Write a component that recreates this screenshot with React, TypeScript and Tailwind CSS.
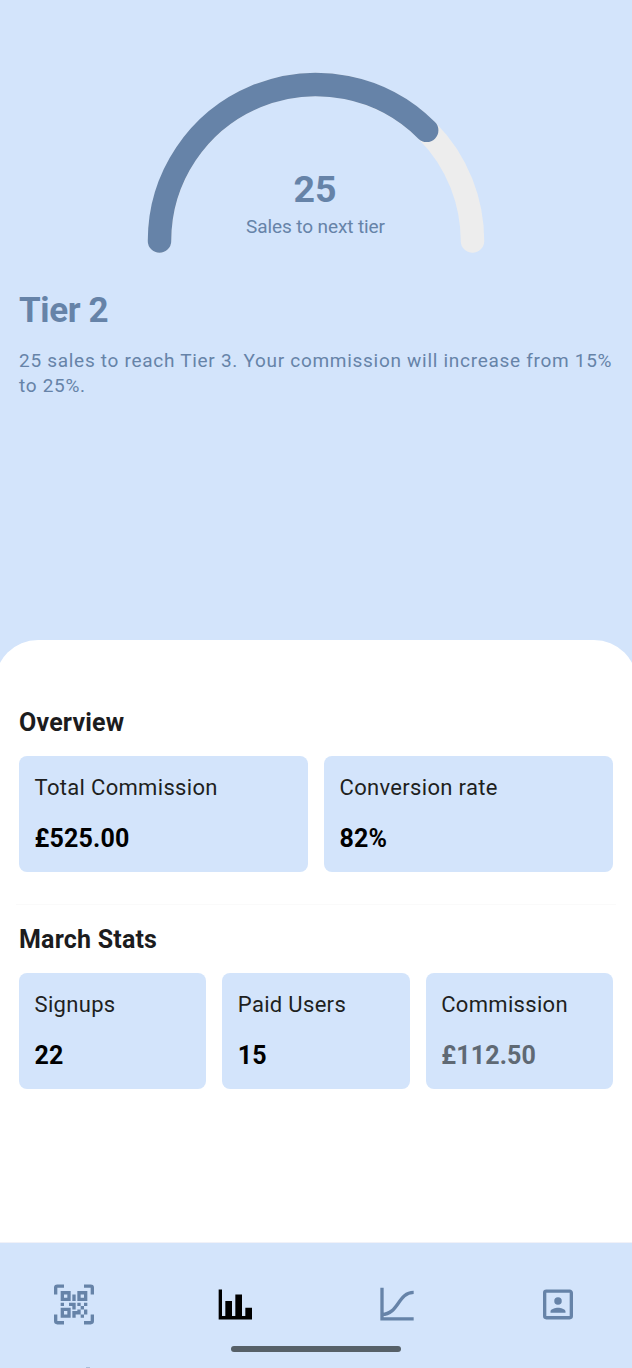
import type { ReactNode } from "react";

type StatProps = { label: string; value: string; muted?: boolean };

function Stat({ label, value, muted }: StatProps) {
  return (
    <div className="h-[116px] min-w-0 flex-1 rounded-lg bg-[#d3e4fb] pl-[15.5px] pt-[18px]">
      <p className="whitespace-nowrap text-[22px] leading-7 tracking-[0.32px] text-[#1e1f21]">{label}</p>
      <p className={`mt-[21px] whitespace-nowrap text-[25px] font-bold leading-8 tracking-[0.15px] ${muted ? "text-[#5f6974]" : "text-black"}`}>
        {value}
      </p>
    </div>
  );
}

function Gauge() {
  return (
    <div className="relative mx-auto h-[181px] w-[338px]">
      <svg viewBox="0 0 338 181" className="h-[181px] w-[338px]" fill="none" strokeWidth="23.5" strokeLinecap="round">
        <path d="M12.5 169A156.5 156.5 0 0 1 325.5 169" stroke="#ededed" />
        <path d="M12.5 169A156.5 156.5 0 0 1 279.66 58.34" stroke="#6683a8" />
      </svg>
      <div className="absolute inset-x-0 top-[95px] text-center text-[#6683a8]">
        <p className="-ml-[2px] text-[37.5px] font-bold leading-[44px]">25</p>
        <p className="-ml-[1px] mt-[4px] text-[19px] leading-6 tracking-[-0.1px]">Sales to next tier</p>
      </div>
    </div>
  );
}

function NavButton({ label, active, children }: { label: string; active?: boolean; children: ReactNode }) {
  return (
    <button aria-label={label} className={`size-10 ${active ? "text-black" : "text-[#6683a8]"}`}>
      <svg viewBox="0 -0.25 24 24" className="size-10 overflow-visible" fill="currentColor">
        {children}
      </svg>
    </button>
  );
}

export default function App() {
  return (
    <div className="flex h-[1368px] w-[632px] flex-col overflow-hidden bg-[#d3e4fb] font-['Roboto',sans-serif]">
      <header className="h-[640px] shrink-0 px-[19px] pt-[72px]">
        <Gauge />
        <h1 className="mt-[37px] text-[35px] font-bold leading-[42px] tracking-[-0.35px] text-[#6683a8]">Tier 2</h1>
        <p className="mt-[16px] whitespace-nowrap text-[19px] leading-[25px] tracking-[0.71px] text-[#6683a8]">
          25 sales to reach Tier 3. Your commission will increase from 15%
          <br />
          to 25%.
        </p>
      </header>

      <main className="-mx-[5px] h-[602px] shrink-0 rounded-t-[43px] bg-white px-6 pt-[67px]">
        <h2 className="text-[25px] font-bold leading-8 tracking-[0.2px] text-[#1c1c1e]">Overview</h2>
        <div className="mt-[17px] flex gap-4">
          <Stat label="Total Commission" value="£525.00" />
          <Stat label="Conversion rate" value="82%" />
        </div>
        <div className="-mx-[3px] mt-8 h-px bg-[#fafafa]" />
        <h2 className="mt-[19px] text-[25px] font-bold leading-8 tracking-[0.2px] text-[#1c1c1e]">March Stats</h2>
        <div className="mt-[17px] flex gap-4">
          <Stat label="Signups" value="22" />
          <Stat label="Paid Users" value="15" />
          <Stat label="Commission" value="£112.50" muted />
        </div>
      </main>

      <nav className="flex flex-1 flex-col items-center border-t border-[#f0f1f8]">
        <div className="flex w-full justify-between px-[54px] pt-[41px]">
          <NavButton label="Scan">
            <path d="M4,4H10V10H4V4M20,4V10H14V4H20M14,15H16V13H14V11H16V13H18V11H20V13H18V15H20V18H18V20H16V18H13V20H11V16H14V15M16,15V18H18V15H16M4,20V14H10V20H4M6,6V8H8V6H6M16,6V8H18V6H16M6,16V18H8V16H6M4,11H6V13H4V11M9,11H13V15H11V13H9V11M11,6H13V10H11V6M2,2V6H0V2A2,2 0 0,1 2,0H6V2H2M22,0A2,2 0 0,1 24,2V6H22V2H18V0H22M2,18V22H6V24H2A2,2 0 0,1 0,22V18H2M22,22V18H24V22A2,2 0 0,1 22,24H18V22H22Z" />
          </NavButton>
          <NavButton label="Stats" active>
            <path d="M22,21H2V3H4V19H6V10H10V19H12V6H16V19H18V14H22V21Z" transform="translate(.2 0)" />
          </NavButton>
          <NavButton label="Growth">
            <path d="M2 2H4V19.7H22V21.7H2Z" />
            <path d="M3 18C13 18 12.5 4.8 22 4.8" fill="none" stroke="currentColor" strokeWidth="2" />
          </NavButton>
          <NavButton label="Account">
            <path d="M19,19H5V5H19M19,3H5A2,2 0 0,0 3,5V19A2,2 0 0,0 5,21H19A2,2 0 0,0 21,19V5C21,3.89 20.1,3 19,3M16.5,16.25C16.5,14.75 13.5,14 12,14C10.5,14 7.5,14.75 7.5,16.25V17H16.5V16.25M12,12.25A2.25,2.25 0 0,0 14.25,10A2.25,2.25 0 0,0 12,7.75A2.25,2.25 0 0,0 9.75,10A2.25,2.25 0 0,0 12,12.25Z" />
          </NavButton>
        </div>
        <div className="mt-[22px] h-[6px] w-[170px] rounded-full bg-[#566068]" />
        <div className="mt-auto h-px w-full pl-[86px]">
          <div className="h-px w-[4px] bg-[#a9bdd8]" />
        </div>
      </nav>
    </div>
  );
}
